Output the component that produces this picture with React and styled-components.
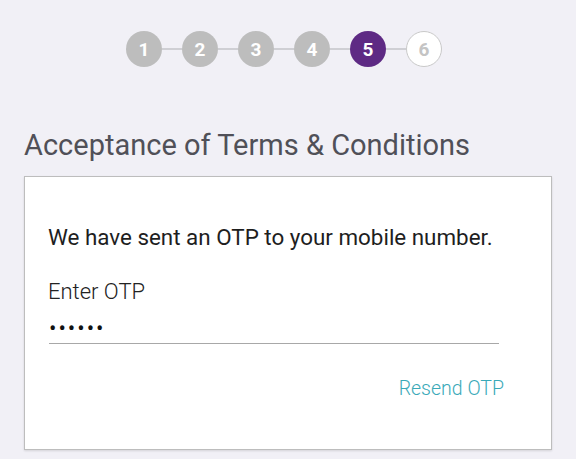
import React from 'react'
import styled, { createGlobalStyle } from 'styled-components'

const GlobalStyle = createGlobalStyle`
  html, body {
    margin: 0;
    padding: 0;
    background: #f1f0f6;
    font-family: Roboto, "Liberation Sans", sans-serif;
  }
`

const Page = styled.div`
  width: 576px;
  height: 459px;
  overflow: hidden;
  padding: 31px 24px 0 24px;
  box-sizing: border-box;
`

const Stepper = styled.div`
  display: flex;
  justify-content: center;
  align-items: center;
  padding-right: 8px;
`

const Step = styled.div`
  width: 36px;
  height: 36px;
  border-radius: 50%;
  box-sizing: border-box;
  display: flex;
  align-items: center;
  justify-content: center;
  font-size: 19px;
  font-weight: 700;
  color: ${p => (p.$state === 'todo' ? '#c4c4c4' : '#fff')};
  background: ${p =>
    p.$state === 'active' ? '#5e2a84' : p.$state === 'done' ? '#bdbdbd' : '#fff'};
  border: ${p => (p.$state === 'todo' ? '1.5px solid #c9c9c9' : 'none')};
`

const Connector = styled.div`
  width: 20px;
  height: 2px;
  background: #cfcfd4;
`

const Title = styled.h1`
  margin: 61px 0 0 0;
  font-size: 29px;
  font-weight: 400;
  color: #505058;
  line-height: 34px;
`

const Card = styled.div`
  margin-top: 14px;
  background: #fff;
  border: 1px solid #bdbdbd;
  box-shadow: 0 1px 2px rgba(0, 0, 0, 0.12);
  height: 274px;
  box-sizing: border-box;
  padding: 45px 23px 0 23px;
`

const Message = styled.p`
  margin: 0;
  font-size: 22.4px;
  color: #1e1e1e;
  line-height: 30px;
`

const Field = styled.div`
  margin-top: 26px;
  width: 450px;
  margin-left: 1px;
`

const Label = styled.label`
  display: block;
  font-size: 22px;
  font-weight: 300;
  color: #222;
  line-height: 28px;
  margin-left: -1px;
`

const OtpInput = styled.input`
  display: block;
  width: 100%;
  margin-top: 12px;
  padding: 0 0 5px 0;
  border: none;
  border-bottom: 1px solid #a8a8a8;
  outline: none;
  background: transparent;
  font-size: 22px;
  line-height: 20px;
  height: 26px;
  box-sizing: border-box;
  letter-spacing: 2px;
  color: #111;
  font-family: Roboto, sans-serif;
`

const Actions = styled.div`
  display: flex;
  justify-content: flex-end;
  width: 456px;
  margin-top: 33px;
`

const Resend = styled.a`
  font-size: 19.5px;
  font-weight: 300;
  color: #3aa9b8;
  text-decoration: none;
  cursor: pointer;
`

const steps = [1, 2, 3, 4, 5, 6]
const current = 5

export default function App() {
  return (
    <>
      <GlobalStyle />
      <Page>
        <Stepper>
          {steps.map((n, i) => (
            <React.Fragment key={n}>
              {i > 0 && <Connector />}
              <Step $state={n < current ? 'done' : n === current ? 'active' : 'todo'}>{n}</Step>
            </React.Fragment>
          ))}
        </Stepper>
        <Title>Acceptance of Terms &amp; Conditions</Title>
        <Card>
          <Message>We have sent an OTP to your mobile number.</Message>
          <Field>
            <Label>Enter OTP</Label>
            <OtpInput type="password" defaultValue="123456" readOnly />
          </Field>
          <Actions>
            <Resend>Resend OTP</Resend>
          </Actions>
        </Card>
      </Page>
    </>
  )
}
